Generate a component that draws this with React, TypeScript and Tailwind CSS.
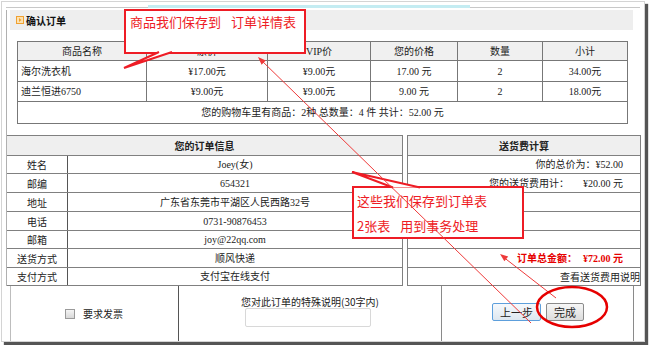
const productRows = [
  ["海尔洗衣机", "¥17.00元", "¥9.00元", "17.00 元", "2", "34.00元"],
  ["迪兰恒进6750", "¥9.00元", "¥9.00元", "9.00 元", "2", "18.00元"],
];

const orderInfo = [
  { label: "姓名", value: "Joey(女)", h: "h-[18px]" },
  { label: "邮编", value: "654321", h: "h-[19px]" },
  { label: "地址", value: "广东省东莞市平湖区人民西路32号", h: "h-[19px]" },
  { label: "电话", value: "0731-90876453", h: "h-[19px]" },
  { label: "邮箱", value: "joy@22qq.com", h: "h-[18px]" },
  { label: "送货方式", value: "顺风快递", h: "h-[19px]" },
  { label: "支付方式", value: "支付宝在线支付", h: "h-[18px]" },
];

const rowHeights = ["h-[18px]", "h-[19px]", "h-[19px]", "h-[19px]", "h-[18px]", "h-[19px]", "h-[18px]"];

const Callouts = () => (
  <>
    <div className="absolute left-[124px] top-[9px] w-[182px] h-[45px] border-2 border-[#ee1c25] bg-white pl-[4px] pt-[3px] text-[13px] leading-[16px] text-[#ee1c25] font-['Noto_Sans_CJK_SC',sans-serif]">
      商品我们保存到<span className="ml-[10px]">订单详情表</span>
    </div>
    <div className="absolute left-[352px] top-[186px] w-[172px] h-[53px] border-2 border-[#ee1c25] bg-white pl-[3px] text-[13px] leading-[25px] text-[#ee1c25] font-['Noto_Sans_CJK_SC',sans-serif]">
      <div>这些我们保存到订单表</div>
      <div>
        2张表<span className="ml-[10px]">用到事务处理</span>
      </div>
    </div>
    <svg className="absolute left-0 top-0" width="650" height="345" viewBox="0 0 650 345">
      <path d="M159 52 L124 68 L172 52" fill="#fff" stroke="#ee1c25" strokeWidth="2" />
      <path d="M393 187.5 L352 172 L420 187.5" fill="#fff" stroke="#ee1c25" strokeWidth="2" />
      <line x1="260" y1="59" x2="531" y2="323" stroke="#ee3a3a" strokeWidth="1" />
      <polygon points="258,57 265.8,60.5 261.6,64.7" fill="#ee3a3a" />
      <line x1="502" y1="256" x2="556" y2="298" stroke="#ee3a3a" strokeWidth="1" />
      <polygon points="500,254 508.2,256.5 504.4,261.3" fill="#ee3a3a" />
      <ellipse cx="572" cy="307" rx="35" ry="20" fill="none" stroke="#e60000" strokeWidth="2.5" />
    </svg>
  </>
);

export default function App() {
  return (
    <div className="relative w-[650px] h-[345px] overflow-hidden bg-white text-[10px] text-[#222] font-['Liberation_Serif','Noto_Sans_CJK_SC',serif]">
      <div className="ml-px mt-px w-[644px] h-[341px] border border-[#d4d4d4] bg-white shadow-[3px_3px_1px_#555]">
        {/* top strip */}
        <div className="ml-[4px] mt-[3px] flex h-[3px] w-[634px]">
          <div className="w-[142px] border-b border-[#c8c8c8]" />
          <div className="w-[322px] bg-[#c4ecf2]" />
          <div className="flex-1 border-b border-[#c8c8c8]" />
        </div>

        <div className="ml-[4px] w-[635px] border-l border-[#b0b0b0]">
          {/* title bar */}
          <div className="ml-[3px] mt-[2px] flex h-[20px] w-[623px] items-center bg-[#eeeeee] pl-[6px]">
            <svg width="8" height="8" viewBox="0 0 8 8">
              <rect x="0.5" y="0.5" width="7" height="7" fill="#fde2b0" stroke="#f0a030" />
              <path d="M3 2 L5.5 4 L3 6 Z" fill="#f0a030" />
            </svg>
            <span className="ml-[2px] text-[10px] font-bold text-[#111] font-['Noto_Sans_CJK_SC',sans-serif]">确认订单</span>
          </div>

          {/* product table */}
          <div className="ml-[10px] mt-[11px] w-[611px] border-l border-t border-[#777] grid grid-cols-[129px_121px_103px_87px_85px_85px]">
            {["商品名称", "原价", "VIP价", "您的价格", "数量", "小计"].map((t) => (
              <div key={t} className="flex h-[19px] items-center justify-center border-b border-r border-[#777] bg-[#f0f0f0]">
                {t}
              </div>
            ))}
            {productRows.map((row, ri) =>
              row.map((t, ci) => (
                <div
                  key={`${ri}-${ci}`}
                  className={`flex items-center border-b border-r border-[#777] ${ri === 0 ? "h-[21px]" : "h-[20px]"} ${ci === 0 ? "justify-start pl-[3px]" : "justify-center"}`}
                >
                  {t}
                </div>
              ))
            )}
            <div className="col-span-6 flex h-[22px] items-center justify-center border-b border-r border-[#777]">
              您的购物车里有商品：2种 总数量：4 件 共计：52.00 元
            </div>
          </div>

          {/* order info + freight */}
          <div className="mt-[11px] flex">
            <div className="w-[396px] border-t border-r border-[#808080]">
              <div className="flex h-[20px] items-center justify-center border-b border-[#808080] bg-[#efefef] font-bold font-['Noto_Sans_CJK_SC',sans-serif]">
                您的订单信息
              </div>
              {orderInfo.map((r) => (
                <div key={r.label} className={`flex border-b border-[#808080] ${r.h}`}>
                  <div className="flex w-[61px] items-center justify-center border-r border-[#555] font-['Noto_Sans_CJK_SC',sans-serif]">
                    {r.label}
                  </div>
                  <div className="flex flex-1 items-center justify-center">{r.value}</div>
                </div>
              ))}
            </div>
            <div className="ml-[4px] w-[234px] border-t border-l border-r border-[#808080]">
              <div className="flex h-[20px] items-center justify-center border-b border-[#808080] bg-[#efefef] font-bold font-['Noto_Sans_CJK_SC',sans-serif]">
                送货费计算
              </div>
              {rowHeights.map((h, i) => (
                <div key={i} className={`flex items-center justify-end border-b border-[#808080] ${h} ${i === 6 ? "pr-0" : "pr-[17px]"}`}>
                  {i === 0 && <span>你的总价为：¥52.00</span>}
                  {i === 1 && (
                    <>
                      <span>您的送货费用计：</span>
                      <span className="ml-[14px]">¥20.00 元</span>
                    </>
                  )}
                  {i === 5 && (
                    <span className="font-bold text-[#e60000]">
                      订单总金额：<span className="ml-[6px]">¥72.00 元</span>
                    </span>
                  )}
                  {i === 6 && <span className="font-['Noto_Sans_CJK_SC',sans-serif]">查看送货费用说明</span>}
                </div>
              ))}
            </div>
          </div>
        </div>

        {/* bottom form */}
        <div className="ml-[8px] flex h-[55px]">
          <div className="flex w-[168px] items-center border-l border-[#bdbdbd] pl-[54px]">
            <span className="h-[10px] w-[10px] border border-[#9a9a9a] bg-gradient-to-b from-[#f4f4f4] to-[#d8d8d8]" />
            <span className="ml-[8px] font-['Noto_Sans_CJK_SC',sans-serif]">要求发票</span>
          </div>
          <div className="w-[263px] border-l border-[#555] pt-[9px]">
            <div className="text-center leading-[13px] font-['Noto_Sans_CJK_SC',sans-serif]">您对此订单的特殊说明(30字内)</div>
            <div className="ml-[66px] h-[19px] w-[126px] rounded-[2px] border border-[#d8d8d8] bg-white" />
          </div>
          <div className="flex w-[193px] items-start gap-[5px] border-l border-r border-[#8a8a8a] pl-[50px] pt-[17px] text-[11px] font-['Noto_Sans_CJK_SC',sans-serif]">
            <div className="flex h-[18px] w-[49px] items-center justify-center rounded-[2px] border border-[#5d9fdc] bg-gradient-to-b from-[#f6f9fc] to-[#dde7f0]">
              上一步
            </div>
            <div className="flex h-[18px] w-[38px] items-center justify-center rounded-[2px] border border-[#8a8a8a] bg-gradient-to-b from-[#f7f7f7] to-[#dcdcdc]">
              完成
            </div>
          </div>
        </div>
      </div>

      <Callouts />
    </div>
  );
}
